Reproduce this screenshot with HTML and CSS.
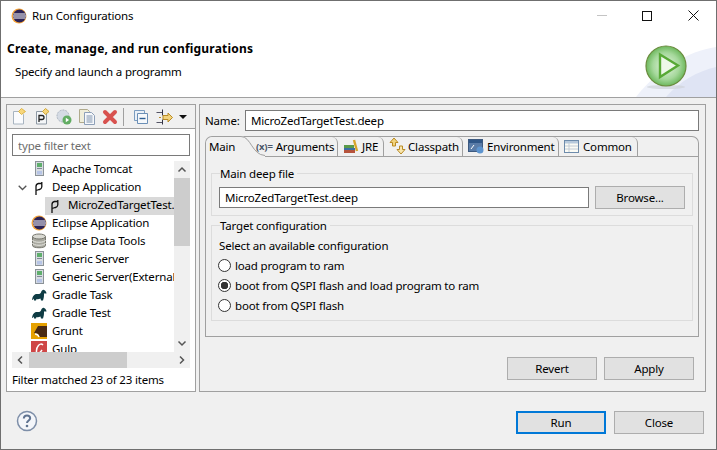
FILE: index.html
```html
<!DOCTYPE html>
<html lang="en">
  <head>
    <meta charset="UTF-8" />
    <meta name="viewport" content="width=device-width, initial-scale=1.0" />
    <title>Run Configurations</title>
    <link rel="stylesheet" href="styles.css">
  </head>
  <body>
    <svg class="iconDefs" width="0" height="0">
      <defs>
        <symbol id="server" viewBox="0 0 16 16">
          <rect x="4.500" y="0.500" width="8" height="14" fill="#d8dde2" stroke="#8b9298"/>
          <rect x="6" y="2" width="5" height="4" fill="#5fae6c"/>
          <rect x="6" y="7" width="5" height="1" fill="#7f8a94"/>
          <rect x="6" y="10" width="5" height="3.500" fill="#b6c4e6"/>
        </symbol>
        <symbol id="deep" viewBox="0 0 16 16">
          <path d="M5 16V7.500Q5 5 7.500 4.500H11M10.800 3V8Q10.500 10 8.500 10.500L5 11.500" fill="none" stroke="#111" stroke-width="1.300"/>
        </symbol>
        <symbol id="eclipse" viewBox="0 0 16 16">
          <circle cx="8" cy="8" r="7.500" fill="#f3a33b"/>
          <circle cx="8.500" cy="8" r="6.500" fill="#2c2255"/>
          <path d="M2.500 6h12M2 8h13M2.500 10h12" stroke="#fff" stroke-width="1"/>
        </symbol>
        <symbol id="database" viewBox="0 0 16 16">
          <path d="M1.500 3.500v9c0 3 13 3 13 0v-9z" fill="#a9a9a0" stroke="#77776f"/>
          <ellipse cx="8" cy="3.500" rx="6.500" ry="2.500" fill="#d9d9d2" stroke="#77776f"/>
          <path d="M1.500 7c0 3 13 3 13 0M1.500 10c0 3 13 3 13 0" fill="none" stroke="#e6e6e0"/>
        </symbol>
        <symbol id="gradle" viewBox="0 0 16 16">
          <path d="M1 13C1.500 9 3.500 6.500 6.500 7C8 7.300 9 7 10 5.500C10.500 3.500 12 2.500 13 3C14.500 3.500 15.500 5 15.500 6.500L14 6.500C13.200 6 13 7 13 8C13 10 12.500 12 12 13.500H10L9.500 11.500C8 12.300 6.500 12.300 5.500 12L5 13.500H3L3 11.500C2.500 12 2 13 1 13z" fill="#0f3c44"/>
        </symbol>
      </defs>
    </svg>

    <div class="dialog">
      <div class="titleBar">
        <svg class="titleIcon" width="16" height="16"><use href="#eclipse"/></svg>
        <span class="titleText">Run Configurations</span>
        <div class="windowBtns">
          <span class="winMin"></span>
          <span class="winMax"></span>
          <svg class="winClose" width="11" height="11" viewBox="0 0 11 11"><path d="M0.500 0.500l10 10M10.500 0.500l-10 10" stroke="#111" fill="none"/></svg>
        </div>
      </div>

      <div class="header">
        <svg class="headerWash" width="120" height="70" viewBox="0 0 120 70">
          <path d="M40 70C62 42 92 24 120 20V70z" fill="#eef1fa"/>
          <path d="M70 70C84 54 102 44 120 40V70z" fill="#dfe4f4"/>
        </svg>
        <div class="headerText">
          <h1>Create, manage, and run configurations</h1>
          <p>Specify and launch a programm</p>
        </div>
        <svg class="playIcon" width="44" height="46" viewBox="0 0 44 46">
          <defs>
            <radialGradient id="playFill" cx="0.500" cy="0.500" r="0.550">
              <stop offset="0" stop-color="#e6f4e2"/>
              <stop offset="0.600" stop-color="#a5d89b"/>
              <stop offset="1" stop-color="#5cae4a"/>
            </radialGradient>
          </defs>
          <ellipse cx="22" cy="42" rx="19" ry="2" fill="#cfd3d8" opacity="0.700"/>
          <circle cx="22" cy="21" r="20" fill="url(#playFill)" stroke="#6b8b3e" stroke-width="1.200"/>
          <path d="M16 9.500L34 20.500L16 32z" fill="#eef8ea" stroke="#58a936" stroke-width="2.400"/>
        </svg>
      </div>

      <div class="content">
        <div class="leftPanel">
          <div class="toolbar">
            <svg width="15" height="17" viewBox="0 0 15 17"><path d="M1.500 3.500h7l3 3v9.500h-10z" fill="#fafbfd" stroke="#a8b4c0"/><path d="M9.500 0.500L13.500 3.500L9.500 6.500L6.500 3.500z" fill="#f7d67c" stroke="#d9ab2e" stroke-width="0.800"/></svg>
            <svg class="toolP" width="15" height="17" viewBox="0 0 15 17"><path d="M1.500 3.500h8l2 2v10.500h-10z" fill="#f4f6f8" stroke="#8f9aa5"/><path d="M4 14V7.500h3a2 2 0 0 1 0 4H4" fill="none" stroke="#222" stroke-width="1.300"/><path d="M10.500 0.500L14 3.500L10.500 6.500L7.500 3.500z" fill="#f7d67c" stroke="#c99b20" stroke-width="0.800"/></svg>
            <svg class="toolRun" width="16" height="16" viewBox="0 0 16 16"><circle cx="7" cy="7" r="6" fill="#d5dbe4" stroke="#a9b2bf" stroke-dasharray="2 1"/><circle cx="11" cy="11" r="4.500" fill="#62ad63"/><path d="M9.800 8.800l3.300 2.200-3.300 2.200z" fill="#fff"/></svg>
            <svg class="toolCopy" width="16" height="16" viewBox="0 0 16 16"><path d="M0.500 0.500h8l2 2v11h-10z" fill="#f0eeda" stroke="#b0aa8c"/><path d="M5.500 3.500h7l3 3v9h-10z" fill="#f6f8fb" stroke="#8ea0b8"/><path d="M7.500 7h6M7.500 9h6M7.500 11h6M7.500 13h6" stroke="#7f93ad"/></svg>
            <svg class="toolDelete" width="16" height="16" viewBox="0 0 16 16"><path d="M3 3l10 10M13 3l-10 10" stroke="#d8524f" stroke-width="4" stroke-linecap="round"/></svg>
            <span class="toolSep"></span>
            <svg class="toolCollapse" width="14" height="14" viewBox="0 0 14 14"><path d="M0.500 0.500h10v10h-10z" fill="#eaf0f7" stroke="#7a9cc0"/><path d="M3.500 3.500h10v10h-10z" fill="#f5f8fb" stroke="#6b8fb6"/><path d="M5.500 8.500h6" stroke="#2d5f95" stroke-width="1.400"/></svg>
            <svg class="toolFilter" width="17" height="16" viewBox="0 0 17 16"><path d="M0.500 3.500h6M0.500 13.500h6" stroke="#556" /><path d="M6.500 0.500v6M6.500 10.500v5" stroke="#334"/><path d="M3 8.500h2M7 6.500h5V4l4.500 4.500L12 13v-2.500H7z" fill="#f2d37c" stroke="#b98a25"/></svg>
            <span class="toolArrow"></span>
          </div>
          <div class="filterBox">
            <input class="filterInput" type="text" placeholder="type filter text" />
          </div>
          <div class="treeWrap">
            <div class="treeArea">
              <ul class="tree">
                <li class="treeRow"><svg class="treeIcon" width="16" height="16"><use href="#server"/></svg>Apache Tomcat</li>
                <li class="treeRow">
                  <svg class="twistie" width="9" height="6" viewBox="0 0 9 6"><path d="M0.700 0.700l3.800 3.800 3.800-3.800" fill="none" stroke="#555" stroke-width="1.300"/></svg>
                  <svg class="treeIcon" width="16" height="16"><use href="#deep"/></svg>Deep Application
                </li>
                <li class="treeRow childRow"><span class="selected"><svg class="treeIcon" width="16" height="16"><use href="#deep"/></svg>MicroZedTargetTest.deep</span></li>
                <li class="treeRow"><svg class="treeIcon" width="16" height="16"><use href="#eclipse"/></svg>Eclipse Application</li>
                <li class="treeRow"><svg class="treeIcon" width="16" height="16"><use href="#database"/></svg>Eclipse Data Tools</li>
                <li class="treeRow"><svg class="treeIcon" width="16" height="16"><use href="#server"/></svg>Generic Server</li>
                <li class="treeRow"><svg class="treeIcon" width="16" height="16"><use href="#server"/></svg>Generic Server(External Launch)</li>
                <li class="treeRow"><svg class="treeIcon" width="16" height="16"><use href="#gradle"/></svg>Gradle Task</li>
                <li class="treeRow"><svg class="treeIcon" width="16" height="16"><use href="#gradle"/></svg>Gradle Test</li>
                <li class="treeRow">
                  <svg class="treeIcon" width="16" height="16" viewBox="0 0 16 16"><rect width="16" height="16" fill="#e6a100"/><path d="M3 10L7 3h9v11H9L7 11z" fill="#4a2a12"/><path d="M4 11q3 0 4 3" fill="none" stroke="#fff" stroke-width="1.300"/></svg>Grunt
                </li>
                <li class="treeRow">
                  <svg class="treeIcon" width="16" height="16" viewBox="0 0 16 16"><rect width="16" height="16" fill="#cf4646"/><path d="M12 4C9 1 5 6 5.500 11C6 14 9 12 11 9" fill="none" stroke="#fff" stroke-width="1.500"/></svg>Gulp
                </li>
              </ul>
              <div class="vScroll">
                <svg width="16" height="17" viewBox="0 0 16 17"><path d="M4.500 10.500L8 7l3.500 3.500" fill="none" stroke="#555" stroke-width="1.500"/></svg>
                <span class="vThumb"></span>
                <svg class="vDown" width="16" height="17" viewBox="0 0 16 17"><path d="M4.500 6.500L8 10l3.500-3.500" fill="none" stroke="#555" stroke-width="1.500"/></svg>
              </div>
            </div>
            <div class="hScroll">
              <svg width="17" height="16" viewBox="0 0 17 16"><path d="M10 4.500L6.500 8l3.500 3.500" fill="none" stroke="#555" stroke-width="1.500"/></svg>
              <span class="hThumb"></span>
              <svg class="hRight" width="17" height="16" viewBox="0 0 17 16"><path d="M7 4.500L10.500 8 7 11.500" fill="none" stroke="#555" stroke-width="1.500"/></svg>
            </div>
          </div>
          <div class="filterStatus">Filter matched 23 of 23 items</div>
        </div>

        <div class="rightPanel">
          <div class="nameRow">
            <label class="nameLabel" for="configName">Name:</label>
            <input class="textField nameField" id="configName" type="text" value="MicroZedTargetTest.deep" />
          </div>

          <div class="tabFolder">
            <div class="tabStrip">
              <div class="tab tabActive">Main</div>
              <svg class="tabCurve" width="24" height="21" viewBox="0 0 24 21"><path d="M0 0H0C10 0 11 19 24 19.500V21H0z" fill="#f0f0f0"/><path d="M0 0.500C10 0.500 11 19 24 19.500" fill="none" stroke="#a0a0a0"/></svg>
              <div class="tab tabArgs"><span class="argsIcon">(x)=</span>Arguments</div>
              <div class="tab tabJre">
                <svg width="16" height="16" viewBox="0 0 16 16"><path d="M1 7h10v3H1z" fill="#5a9a4a"/><path d="M1 10h11v2H1z" fill="#3a6ea5"/><path d="M1 12h11v3H1z" fill="#b5533c"/><path d="M11 2l3 11" stroke="#d8a52c" stroke-width="2.400"/></svg>JRE
              </div>
              <div class="tab tabClass">
                <svg width="17" height="18" viewBox="0 0 17 18"><path d="M5 1L1 5.500h2.500V9h3V5.500H9z" fill="#f2d37c" stroke="#b98a25"/><path d="M12 17l4-4.500h-2.500V9h-3v3.500H8z" fill="#f8e6ae" stroke="#b98a25"/></svg>Classpath
              </div>
              <div class="tab tabEnv">
                <svg width="16" height="16" viewBox="0 0 16 16"><rect x="0.500" y="1.500" width="14" height="12" fill="#5a7ca8" stroke="#3d5a80"/><rect x="1" y="2" width="13" height="3" fill="#2f5687"/><path d="M3 11l3-4" stroke="#fff"/><circle cx="12" cy="12" r="3.500" fill="#5d94cf"/></svg>Environment
              </div>
              <div class="tab tabCommon">
                <svg width="15" height="15" viewBox="0 0 15 15"><rect x="0.500" y="1.500" width="14" height="12" fill="#fbfbf5" stroke="#6d8bab"/><rect x="1" y="2" width="13" height="2.500" fill="#b7c9dc"/><path d="M5 4v9M1 7h13M1 10h13" stroke="#c3ccd6"/></svg>Common
              </div>
            </div>
            <div class="tabBody">
              <fieldset class="group mainGroup">
                <legend>Main deep file</legend>
                <div class="fileRow">
                  <input class="textField fileField" type="text" value="MicroZedTargetTest.deep" />
                  <button class="btn" type="button">Browse...</button>
                </div>
              </fieldset>
              <fieldset class="group targetGroup">
                <legend>Target configuration</legend>
                <div class="selectText">Select an available configuration</div>
                <label class="radioRow"><input type="radio" name="target" />load program to ram</label>
                <label class="radioRow"><input type="radio" name="target" checked />boot from QSPI flash and load program to ram</label>
                <label class="radioRow"><input type="radio" name="target" />boot from QSPI flash</label>
              </fieldset>
            </div>
          </div>

          <div class="panelBtns">
            <button class="btn" type="button">Revert</button>
            <button class="btn" type="button">Apply</button>
          </div>
        </div>
      </div>

      <div class="footer">
        <svg width="22" height="22" viewBox="0 0 22 22"><circle cx="11" cy="11" r="9.500" fill="#f4f6fa" stroke="#7d8ea8" stroke-width="1.500"/><path d="M7.800 8.500Q8 5.500 11 5.500T14.200 8.300C14.200 10.500 11 10.500 11 13" fill="none" stroke="#5f7391" stroke-width="2"/><circle cx="11" cy="16" r="1.300" fill="#5f7391"/></svg>
        <div class="footerBtns">
          <button class="btn btnDefault" type="button">Run</button>
          <button class="btn" type="button">Close</button>
        </div>
      </div>
    </div>
  </body>
</html>
```

FILE: styles.css
```css
* {
  box-sizing: border-box;
}

html,
body {
  margin: 0;
  height: 100%;
}

body {
  font-family: "Noto Sans", "Open Sans", sans-serif;
  font-size: 11.5px;
  letter-spacing: -0.17px;
  color: #000;
  overflow: hidden;
}

.iconDefs {
  position: absolute;
}

.dialog {
  width: 717px;
  height: 450px;
  background-color: #f0f0f0;
  border: 1px solid #6f6f6f;
  display: flex;
  flex-direction: column;
}

.titleBar {
  height: 30px;
  background-color: #fff;
  display: flex;
  align-items: center;
  padding-left: 10px;
}

.titleText {
  margin-left: 5px;
  margin-top: -1px;
}

.titleIcon {
  margin-top: -1px;
}

.windowBtns {
  margin-left: auto;
  display: flex;
  align-items: center;
  margin-right: 17px;
  margin-top: -1px;
}

.winMin {
  width: 10px;
  height: 1px;
  background-color: #c4c4c4;
  margin-right: 35px;
}

.winMax {
  width: 10px;
  height: 10px;
  border: 1px solid #111;
  margin-right: 36px;
}

.header {
  height: 67px;
  background-color: #fff;
  border-bottom: 1px solid #a0a0a0;
  display: flex;
  position: relative;
  overflow: hidden;
}

.headerWash {
  position: absolute;
  right: 0;
  bottom: 0;
}

.headerText {
  padding-left: 6px;
}

.headerText h1 {
  margin: 9px 0 0;
  font-size: 12px;
  font-weight: bold;
  letter-spacing: 0.2px;
  line-height: 17px;
}

.headerText p {
  margin: 6px 0 0 8px;
  line-height: 17px;
}

.playIcon {
  position: absolute;
  left: 643px;
  top: 14px;
}

.content {
  display: flex;
  gap: 3px;
  padding: 6px 0 0 5px;
}

.leftPanel {
  width: 190px;
  height: 288px;
  background-color: #fff;
  border: 1px solid #a0a0a0;
  display: flex;
  flex-direction: column;
}

.toolbar {
  height: 24px;
  background-color: #f0f0f0;
  border-bottom: 1px solid #a0a0a0;
  display: flex;
  align-items: center;
  padding-left: 5px;
}

.toolP {
  margin-left: 8px;
}

.toolRun {
  margin-left: 6px;
}

.toolCopy {
  margin-left: 7px;
}

.toolDelete {
  margin-left: 7px;
}

.toolSep {
  width: 1px;
  height: 18px;
  background-color: #a0a0a0;
  margin-left: 5px;
}

.toolCollapse {
  margin-left: 10px;
}

.toolFilter {
  margin-left: 8px;
}

.toolArrow {
  width: 0;
  height: 0;
  margin-left: 6px;
  border-left: 4px solid transparent;
  border-right: 4px solid transparent;
  border-top: 4px solid #111;
}

.filterBox {
  padding: 5px 5px 0;
}

.filterInput {
  display: block;
  width: 178px;
  height: 22px;
  border: 1px solid #7a7a7a;
  padding: 0 5px;
  font: inherit;
  letter-spacing: inherit;
  outline: none;
}

.filterInput::placeholder {
  color: #6d6d6d;
  opacity: 1;
}

.treeWrap {
  margin: 5px 5px 0;
}

.treeArea {
  display: flex;
  height: 191px;
}

.tree {
  list-style: none;
  margin: 0;
  padding: 0;
  width: 162px;
  overflow: hidden;
}

.treeRow {
  height: 18px;
  line-height: 18px;
  display: flex;
  align-items: center;
  white-space: nowrap;
  padding: 0 0 2px 19px;
  position: relative;
}

.treeIcon {
  flex: none;
  margin-right: 5px;
}

.twistie {
  position: absolute;
  left: 6px;
  top: 6px;
}

.childRow {
  padding: 0 0 0 33px;
}

.selected {
  display: flex;
  align-items: center;
  background-color: #d9d9d9;
  height: 18px;
  width: 129px;
  padding: 0 0 2px 2px;
  overflow: hidden;
}

.vScroll {
  width: 16px;
  height: 191px;
  background-color: #f0f0f0;
  display: flex;
  flex-direction: column;
}

.vThumb {
  height: 68px;
  background-color: #cdcdcd;
}

.vDown {
  margin-top: auto;
}

.hScroll {
  height: 16px;
  background-color: #f0f0f0;
  display: flex;
}

.hThumb {
  width: 98px;
  background-color: #cdcdcd;
}

.hRight {
  margin-left: auto;
}

.filterStatus {
  padding: 3px 5px 0;
  line-height: 17px;
}

.rightPanel {
  width: 507px;
  height: 288px;
  border: 1px solid #a0a0a0;
  padding: 5px 6px 0 5px;
  display: flex;
  flex-direction: column;
}

.nameRow {
  display: flex;
  align-items: center;
}

.nameLabel {
  width: 40px;
}

.textField {
  height: 21px;
  border: 1px solid #7a7a7a;
  background-color: #fff;
  padding: 0 5px;
  font: inherit;
  letter-spacing: inherit;
  outline: none;
}

.nameField {
  width: 454px;
}

.tabFolder {
  margin-top: 5px;
  width: 494px;
  height: 201px;
  display: flex;
  flex-direction: column;
}

.tabStrip {
  height: 21px;
  display: flex;
  position: relative;
  z-index: 1;
  border: 1px solid #a0a0a0;
  border-bottom: none;
  border-radius: 7px 7px 0 0;
}

.tab {
  height: 19px;
  display: flex;
  align-items: center;
  gap: 3px;
  border-right: 1px solid #a0a0a0;
  border-top-right-radius: 6px;
  padding-bottom: 1px;
}

.tab svg {
  flex: none;
}

.tabActive {
  height: 20px;
  width: 35px;
  padding-left: 3px;
  border-right: none;
  border-radius: 7px 0 0 0;
  background-color: #f0f0f0;
}

.tabCurve {
  flex: none;
  margin: -1px 0 -1px 0;
}

.tabArgs {
  margin-left: -8px;
  width: 81px;
}

.argsIcon {
  font-size: 9.5px;
  font-weight: bold;
  color: #4a5568;
  margin-left: -1px;
}

.tabJre {
  width: 46px;
  padding-left: 5px;
}

.tabClass {
  width: 79px;
  padding-left: 5px;
  gap: 2px;
}

.tabEnv {
  width: 96px;
  padding-left: 5px;
}

.tabCommon {
  width: 79px;
  padding-left: 5px;
  gap: 4px;
}

.tabBody {
  flex: 1;
  margin-top: -1px;
  border: 1px solid #a0a0a0;
  padding: 8px 5px 0;
}

.group {
  margin: 0;
  padding: 0 7px;
  border: 1px solid #dcdcdc;
  min-width: 0;
}

.group legend {
  margin-left: 1px;
  padding: 0 3px 0 0;
  line-height: 17px;
}

.mainGroup {
  height: 51px;
  padding-top: 4px;
}

.fileRow {
  display: flex;
  align-items: center;
  gap: 6px;
}

.fileField {
  width: 370px;
}

.targetGroup {
  height: 104px;
  margin-top: 1px;
}

.selectText {
  line-height: 17px;
  margin: 3px 0 1px;
}

.radioRow {
  display: flex;
  align-items: center;
  height: 20px;
}

.radioRow input {
  appearance: none;
  flex: none;
  width: 13px;
  height: 13px;
  margin: 0 4px 0 -1px;
  background-color: #fff;
  border: 1px solid #333;
  border-radius: 50%;
}

.radioRow input:checked {
  background: radial-gradient(circle, #333 0 3.5px, #fff 4px);
}

.btn {
  width: 90px;
  height: 23px;
  background-color: #e1e1e1;
  border: 1px solid #adadad;
  font: inherit;
  letter-spacing: inherit;
  padding: 0;
  color: #000;
}

.btnDefault {
  border: 2px solid #0078d7;
}

.panelBtns {
  display: flex;
  justify-content: flex-end;
  gap: 7px;
  margin-top: 20px;
  width: 494px;
  padding-right: 5px;
}

.footer {
  flex: 1;
  display: flex;
  align-items: flex-start;
  padding: 18px 12px 0 15px;
}

.footerBtns {
  margin-left: auto;
  margin-top: 1px;
  display: flex;
  gap: 8px;
}
```
